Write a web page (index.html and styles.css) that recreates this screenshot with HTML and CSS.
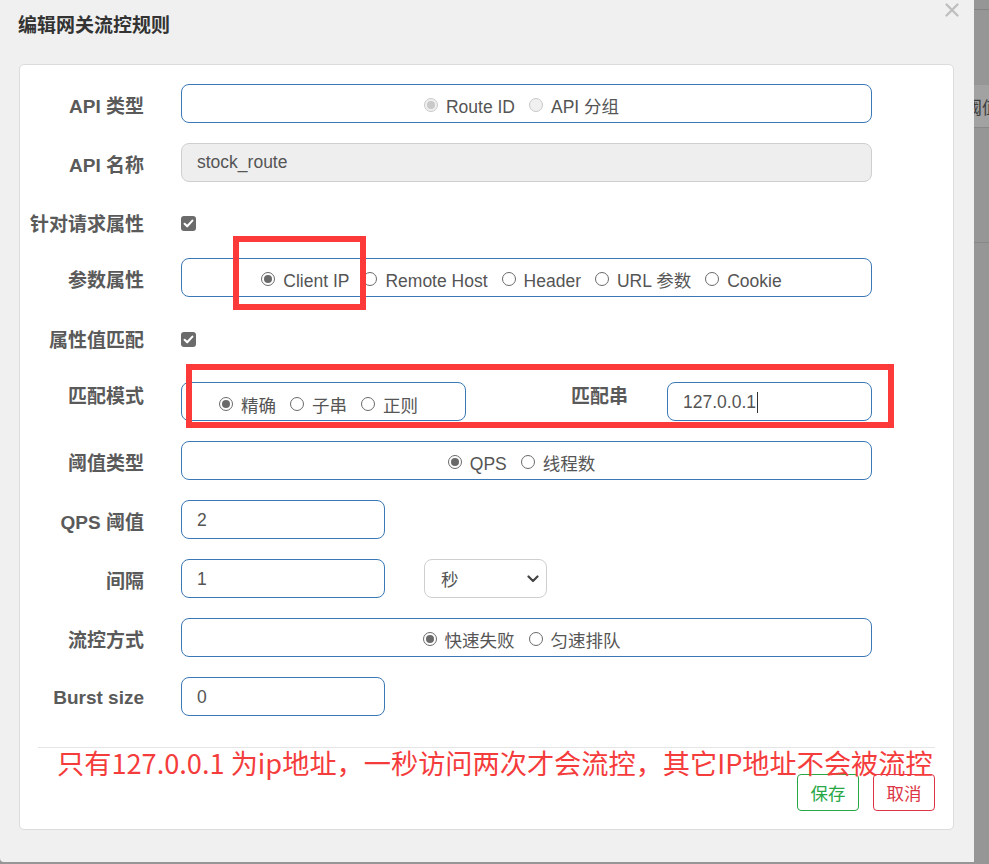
FILE: index.html
```
<!DOCTYPE html>
<html lang="zh-CN">
<head>
<meta charset="utf-8">
<title>编辑网关流控规则</title>
<link rel="stylesheet" href="styles.css">
</head>
<body>
<div class="screen">
  <div class="dialog">
    <div class="dlg-head">
      <h3 class="dlg-title">编辑网关流控规则</h3>
      <span class="close"><svg width="14" height="14" viewBox="0 0 14 14"><path d="M1.5 1.5 L12.5 12.5 M12.5 1.5 L1.5 12.5" stroke="#bdbdbd" stroke-width="2.2" stroke-linecap="round"/></svg></span>
    </div>
    <div class="panel">
      <div class="form">
        <div class="row">
          <div class="lbl">API 类型</div>
          <div class="field box radios">
            <span class="opt"><span class="radio disabled checked"></span>Route ID</span>
            <span class="opt"><span class="radio disabled"></span>API 分组</span>
          </div>
        </div>
        <div class="row">
          <div class="lbl">API 名称</div>
          <div class="field box readonly">stock_route</div>
        </div>
        <div class="row row-check row-attr">
          <div class="lbl">针对请求属性</div>
          <span class="check"><svg width="15" height="15" viewBox="0 0 15 15"><rect width="15" height="15" rx="3" fill="#6b6b6b"/><path d="M3.6 7.8 L6.2 10.3 L11.4 4.6" fill="none" stroke="#fff" stroke-width="2.1" stroke-linecap="round" stroke-linejoin="round"/></svg></span>
        </div>
        <div class="row">
          <div class="lbl">参数属性</div>
          <div class="field box radios">
            <span class="opt"><span class="radio checked"></span>Client IP</span>
            <span class="opt"><span class="radio"></span>Remote Host</span>
            <span class="opt"><span class="radio"></span>Header</span>
            <span class="opt"><span class="radio"></span>URL 参数</span>
            <span class="opt"><span class="radio"></span>Cookie</span>
          </div>
        </div>
        <div class="row row-check row-value">
          <div class="lbl">属性值匹配</div>
          <span class="check"><svg width="15" height="15" viewBox="0 0 15 15"><rect width="15" height="15" rx="3" fill="#6b6b6b"/><path d="M3.6 7.8 L6.2 10.3 L11.4 4.6" fill="none" stroke="#fff" stroke-width="2.1" stroke-linecap="round" stroke-linejoin="round"/></svg></span>
        </div>
        <div class="row row-mode">
          <div class="lbl">匹配模式</div>
          <div class="split">
            <div class="box radios mode">
              <span class="opt"><span class="radio checked"></span>精确</span>
              <span class="opt"><span class="radio"></span>子串</span>
              <span class="opt"><span class="radio"></span>正则</span>
            </div>
            <div class="lbl inner-lbl">匹配串</div>
            <div class="box text-in match">127.0.0.1<span class="caret"></span></div>
          </div>
        </div>
        <div class="row">
          <div class="lbl">阈值类型</div>
          <div class="field box radios">
            <span class="opt"><span class="radio checked"></span>QPS</span>
            <span class="opt"><span class="radio"></span>线程数</span>
          </div>
        </div>
        <div class="row">
          <div class="lbl">QPS 阈值</div>
          <div class="box text-in small">2</div>
        </div>
        <div class="row">
          <div class="lbl">间隔</div>
          <div class="box text-in small">1</div>
          <div class="select">秒<svg class="chev" width="12" height="8" viewBox="0 0 12 8"><path d="M1.5 1.5 L6 6 L10.5 1.5" fill="none" stroke="#444" stroke-width="2.2" stroke-linecap="round" stroke-linejoin="round"/></svg></div>
        </div>
        <div class="row">
          <div class="lbl">流控方式</div>
          <div class="field box radios">
            <span class="opt"><span class="radio checked"></span>快速失败</span>
            <span class="opt"><span class="radio"></span>匀速排队</span>
          </div>
        </div>
        <div class="row row-burst">
          <div class="lbl">Burst size</div>
          <div class="box text-in small">0</div>
        </div>
      </div>
      <div class="footer">
        <span class="btn btn-save">保存</span>
        <span class="btn btn-cancel">取消</span>
      </div>
      <div class="note">只有127.0.0.1 为ip地址，一秒访问两次才会流控，其它IP地址不会被流控</div>
      <div class="mark mark-1"></div>
      <div class="mark mark-2"></div>
    </div>
  </div>
  <div class="backdrop">
    <div class="bd-top"></div>
    <div class="bd-head">阈值</div>
    <div class="bd-row"></div>
  </div>
</div>
</body>
</html>
```
FILE: styles.css
```
* { box-sizing: border-box; }
html, body { margin: 0; padding: 0; }
body {
  width: 989px;
  height: 864px;
  overflow: hidden;
  background: #969696;
  font-family: "Liberation Sans", Arial, "Noto Sans CJK SC", sans-serif;
  color: #555;
}
.screen {
  display: flex;
  height: 864px;
}
.dialog {
  width: 974px;
  height: 862px;
  background: #f0f0f0;
  border-bottom-left-radius: 4px;
  flex: none;
  position: relative;
}
.dlg-head {
  height: 64px;
  position: relative;
}
.dlg-title {
  margin: 0;
  padding: 14px 0 0 18px;
  font-size: 19px;
  line-height: 24px;
  font-weight: bold;
  color: #333;
}
.close {
  position: absolute;
  right: 15px;
  top: 3px;
  width: 14px;
  height: 14px;
  display: block;
}
.close svg { display: block; }
.panel {
  position: relative;
  margin-left: 19px;
  width: 935px;
  height: 766px;
  background: #fff;
  border: 1px solid #dcdcdc;
  border-radius: 5px;
  padding: 19px 0 0 0;
}
.form {
  display: flex;
  flex-direction: column;
  gap: 20px;
}
.row {
  display: flex;
  align-items: center;
  height: 39px;
}
.row-attr { margin-top: 2px; margin-bottom: -5px; }
.row-value { margin-top: 3px; margin-bottom: 3px; }
.lbl {
  width: 124px;
  margin-right: 37px;
  text-align: right;
  font-size: 19px;
  font-weight: bold;
  color: #5a5a5a;
  line-height: 24px;
  padding-top: 6px;
  flex: none;
}
.row-check .lbl { padding-top: 2px; }
.row-mode .lbl { padding-top: 0; padding-bottom: 10px; }
.row-burst .lbl { padding-top: 2px; }
.box {
  height: 39px;
  border: 1px solid #3a78b6;
  border-radius: 8px;
  background: #fff;
  font-size: 17.5px;
  color: #555;
  display: flex;
  align-items: center;
}
.field { width: 691px; }
.readonly {
  background: #eee;
  border-color: #cfcfcf;
  padding-left: 15px;
}
.radios {
  justify-content: center;
  gap: 14px;
  padding-top: 6px;
  padding-right: 10px;
}
.opt {
  display: inline-flex;
  align-items: center;
  gap: 8px;
  line-height: 22px;
}
.radio {
  width: 14px;
  height: 14px;
  border: 1.2px solid #6a6a6a;
  border-radius: 50%;
  background: #fff;
  display: inline-flex;
  align-items: center;
  justify-content: center;
  flex: none;
  margin-top: -3px;
}
.radio.checked::after {
  content: "";
  width: 8px;
  height: 8px;
  border-radius: 50%;
  background: #6a6a6a;
}
.radio.disabled {
  border-color: #c9c9c9;
  background: #f0f0f0;
}
.radio.disabled.checked::after {
  background: #c9c9c9;
}
.check { display: block; width: 15px; height: 15px; }
.check svg { display: block; }
.split {
  display: flex;
  align-items: center;
  width: 691px;
}
.mode {
  width: 285px;
  padding-top: 8px;
  gap: 14px;
}
.inner-lbl {
  width: auto;
  flex: 1;
  margin-right: 39px;
}
.match { width: 205px; }
.text-in {
  padding-left: 15px;
  padding-top: 1px;
}
.small { width: 204px; flex: none; }
.caret {
  display: inline-block;
  width: 1px;
  height: 21px;
  background: #333;
  margin-left: 1px;
}
.select {
  margin-left: 39px;
  width: 123px;
  height: 39px;
  border: 1px solid #cfcfcf;
  border-radius: 8px;
  display: flex;
  align-items: center;
  justify-content: space-between;
  padding: 0 7px 0 16px;
  font-size: 17.5px;
  color: #555;
}
.chev { display: block; }
.footer {
  margin: 31px 18px 0 18px;
  border-top: 1px solid #e5e5e5;
  padding-top: 26px;
  display: flex;
  justify-content: flex-end;
  gap: 14px;
}
.btn {
  width: 62px;
  height: 37px;
  border-radius: 4px;
  border: 1px solid;
  font-size: 17.5px;
  display: flex;
  align-items: center;
  justify-content: center;
  background: #fff;
}
.btn-save { color: #28a745; border-color: #28a745; }
.btn-cancel { color: #dc3545; border-color: #dc3545; }
.note {
  position: absolute;
  left: 37px;
  top: 679px;
  font-family: "Noto Sans CJK SC", "Liberation Sans", sans-serif;
  font-size: 27.2px;
  line-height: 36px;
  color: #f53c3c;
  white-space: nowrap;
}
.mark {
  position: absolute;
  border: 6.5px solid #fc3a3a;
}
.mark-1 {
  left: 213px;
  top: 171px;
  width: 133px;
  height: 74px;
}
.mark-2 {
  left: 166px;
  top: 299px;
  width: 708px;
  height: 64px;
}
.backdrop {
  flex: 1;
  overflow: hidden;
  background: #969696;
}
.bd-top {
  height: 10px;
  border-bottom: 1px solid #838383;
}
.bd-head {
  margin-top: 75px;
  height: 43px;
  background: #a2a2a2;
  border-bottom: 1px solid #888;
  font-family: "Noto Sans CJK SC", sans-serif;
  font-size: 17px;
  line-height: 43px;
  color: #3c3c3c;
  margin-left: -9px;
  padding-left: 0;
  white-space: nowrap;
}
.bd-row {
  height: 115px;
  border-bottom: 1px solid #888;
}
```
